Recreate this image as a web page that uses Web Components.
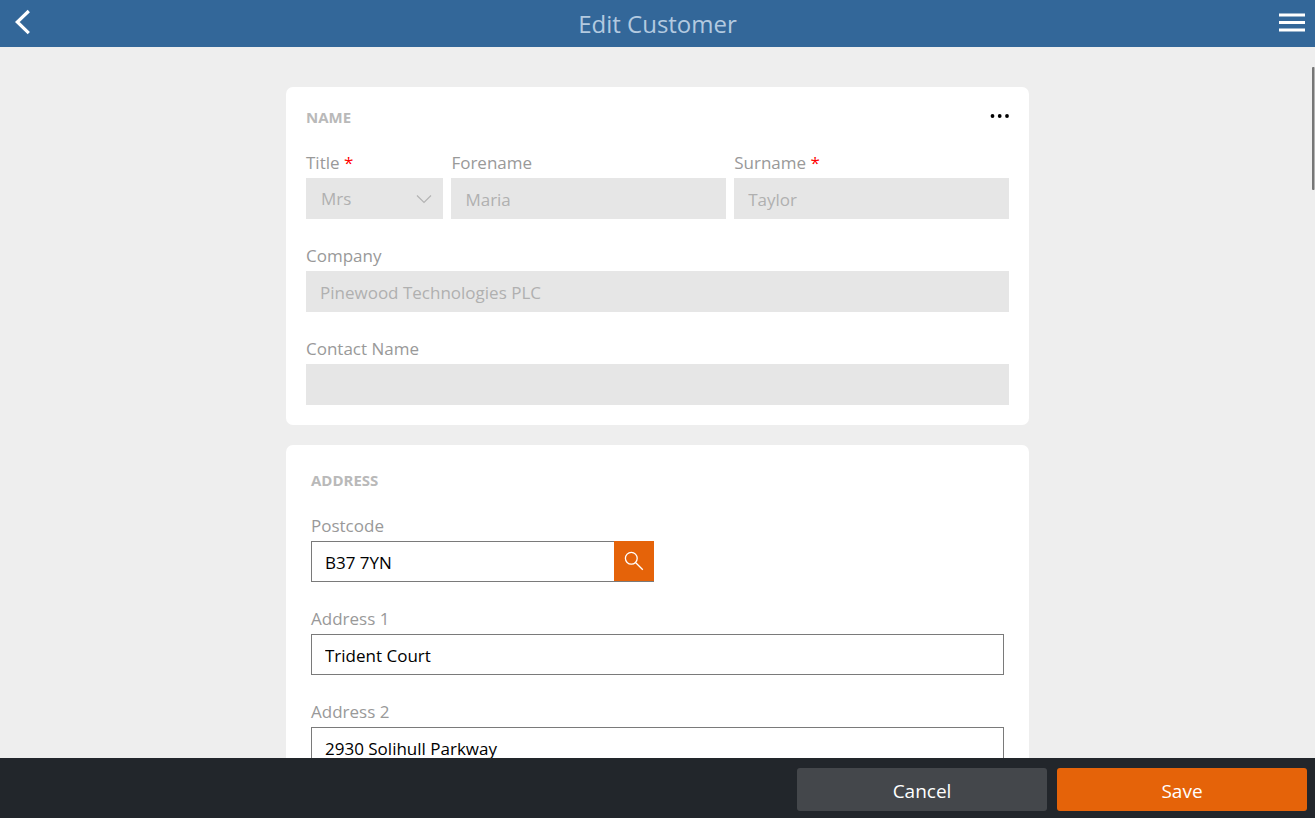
<!DOCTYPE html>
<html lang="en">
<head>
<meta charset="utf-8">
<meta name="viewport" content="width=device-width, initial-scale=1">
<title>Edit Customer</title>
<style>
    html, body {
        height: 100%;
        margin: 0;
    }

    body {
        font-family: 'Open Sans', 'Noto Sans', sans-serif;
        font-size: 17px;
        color: #000;
        --brand: #336799;
        --accent: #e56309;
    }
</style>
</head>
<body>
<customer-page></customer-page>

<script>
class AppHeader extends HTMLElement {
    constructor() {
        super();
        this.attachShadow({ mode: 'open' });
    }

    connectedCallback() {
        this.shadowRoot.innerHTML = `
            <style>
                :host {
                    display: grid;
                    grid-template-columns: 48px 1fr 48px;
                    align-items: center;
                    height: 47px;
                    background: var(--brand);
                }

                h1 {
                    margin: 0;
                    font-size: 24px;
                    font-weight: 400;
                    line-height: 47px;
                    text-align: center;
                    color: #b3cae0;
                }

                button {
                    display: flex;
                    align-items: center;
                    height: 44px;
                    padding: 0 10px;
                    border: 0;
                    background: none;
                    align-self: start;
                }

                .menu {
                    justify-content: flex-end;
                }

                svg {
                    display: block;
                    fill: none;
                    stroke: #fff;
                }
            </style>
            <button type="button" aria-label="Back">
                <svg width="24" height="26" viewBox="0 0 24 26" stroke-width="3.2"><path d="M18.8 2 7.3 13 18.8 24.2"/></svg>
            </button>
            <h1><slot></slot></h1>
            <button type="button" class="menu" aria-label="Menu">
                <svg width="26" height="20" viewBox="0 0 26 20" stroke-width="2.8"><path d="M0 3h26M0 10.5h26M0 18h26"/></svg>
            </button>
        `;
    }
}

class FormCard extends HTMLElement {
    constructor() {
        super();
        this.attachShadow({ mode: 'open' });
    }

    connectedCallback() {
        this.shadowRoot.innerHTML = `
            <style>
                :host {
                    display: block;
                    padding: 20px;
                    border-radius: 7px;
                    background: #fff;
                }

                :host([inset]) {
                    padding: 25px;
                }

                header {
                    display: flex;
                    justify-content: space-between;
                    align-items: center;
                    height: 20px;
                    margin-bottom: 23px;
                }

                h2 {
                    margin: 0;
                    font-size: 15px;
                    font-weight: 700;
                    line-height: 20px;
                    text-transform: uppercase;
                    color: #b9b9b9;
                }

                .fields {
                    display: grid;
                    gap: 24px;
                }
            </style>
            <header>
                <h2>${this.getAttribute('heading')}</h2>
                <slot name="action"></slot>
            </header>
            <div class="fields"><slot></slot></div>
        `;
    }
}

class MoreButton extends HTMLElement {
    constructor() {
        super();
        this.attachShadow({ mode: 'open' });
    }

    connectedCallback() {
        this.shadowRoot.innerHTML = `
            <style>
                :host {
                    display: block;
                }

                button {
                    display: block;
                    padding: 0;
                    border: 0;
                    background: none;
                }

                svg {
                    display: block;
                }
            </style>
            <button type="button" aria-label="More">
                <svg width="20" height="20" viewBox="0 0 20 20"><circle cx="3.5" cy="9" r="1.9"/><circle cx="10.7" cy="9" r="1.9"/><circle cx="18" cy="9" r="1.9"/></svg>
            </button>
        `;
    }
}

class FormRow extends HTMLElement {
    constructor() {
        super();
        this.attachShadow({ mode: 'open' });
    }

    connectedCallback() {
        this.shadowRoot.innerHTML = `
            <style>
                :host {
                    display: grid;
                    grid-template-columns: 1fr 2fr 2fr;
                    gap: 8px;
                }

                :host([halves]) {
                    grid-template-columns: 1fr 1fr;
                }
            </style>
            <slot></slot>
        `;
    }
}

class FormField extends HTMLElement {
    constructor() {
        super();
        this.attachShadow({ mode: 'open' });
    }

    connectedCallback() {
        const label = this.getAttribute('label');
        const value = this.getAttribute('value') || '';
        const disabled = this.hasAttribute('disabled') ? 'disabled' : '';
        const star = this.hasAttribute('required') ? ' <span class="star">*</span>' : '';

        let control = `<input id="control" type="text" value="${value}" ${disabled}>`;
        if (this.getAttribute('type') === 'select') {
            control = `
                <select id="control" ${disabled}><option>${value}</option></select>
                <svg class="chevron" width="16" height="10" viewBox="0 0 16 10"><path d="M1 1.5 8 8.500l7-7"/></svg>
            `;
        }

        this.shadowRoot.innerHTML = `
            <style>
                :host {
                    display: block;
                    min-width: 0;
                }

                label {
                    display: block;
                    padding-bottom: 2px;
                    line-height: 26px;
                    color: #999;
                }

                .star {
                    color: #f00;
                }

                .box {
                    display: flex;
                    align-items: center;
                    box-sizing: border-box;
                    height: 41px;
                    border: 1px solid #7a7a7a;
                    background: #fff;
                }

                :host([disabled]) .box {
                    border-color: #e6e6e6;
                    background: #e6e6e6;
                }

                input, select {
                    flex: 1;
                    min-width: 0;
                    height: 39px;
                    box-sizing: border-box;
                    margin: 0;
                    padding: 2px 13px 0;
                    border: 0;
                    border-radius: 0;
                    outline: 0;
                    appearance: none;
                    background: none;
                    font: inherit;
                    color: inherit;
                    opacity: 1;
                }

                select {
                    padding: 0 14px;
                }

                input:disabled, select:disabled {
                    color: #b0b0b0;
                }

                .chevron {
                    flex: none;
                    margin-right: 10px;
                    fill: none;
                    stroke: #b4b4b4;
                    stroke-width: 1.2;
                }
            </style>
            <label for="control">${label}${star}</label>
            <div class="box">${control}<slot></slot></div>
        `;
    }
}

class SearchButton extends HTMLElement {
    constructor() {
        super();
        this.attachShadow({ mode: 'open' });
    }

    connectedCallback() {
        this.shadowRoot.innerHTML = `
            <style>
                :host {
                    display: block;
                    flex: none;
                    /* sits over the border of the field */
                    margin: -1px -1px 0 0;
                }

                button {
                    display: flex;
                    justify-content: center;
                    align-items: center;
                    width: 40px;
                    height: 40px;
                    padding: 0;
                    border: 0;
                    background: var(--accent);
                }
            </style>
            <button type="button" aria-label="Find address">
                <svg width="20" height="20" viewBox="0 0 20 20" fill="none" stroke="#fff" stroke-width="1.3"><circle cx="7.300" cy="7.300" r="5.900"/><path d="m11.500 11.500 7.300 7.300"/></svg>
            </button>
        `;
    }
}

class ActionButton extends HTMLElement {
    constructor() {
        super();
        this.attachShadow({ mode: 'open' });
    }

    connectedCallback() {
        this.shadowRoot.innerHTML = `
            <style>
                :host {
                    display: block;
                    flex: 0 1 250px;
                }

                button {
                    display: block;
                    width: 100%;
                    height: 43px;
                    padding: 2px 0 0;
                    border: 0;
                    border-radius: 3px;
                    background: #44474b;
                    font: inherit;
                    font-size: 19px;
                    color: #fff;
                }

                :host([primary]) button {
                    background: var(--accent);
                }
            </style>
            <button type="button"><slot></slot></button>
        `;
    }
}

class CustomerPage extends HTMLElement {
    constructor() {
        super();
        this.attachShadow({ mode: 'open' });
    }

    connectedCallback() {
        this.shadowRoot.innerHTML = `
            <style>
                :host {
                    display: flex;
                    flex-direction: column;
                    position: relative;
                    height: 100vh;
                    background: #eee;
                }

                main {
                    flex: 1;
                    min-height: 0;
                    overflow-y: auto;
                    scrollbar-width: none;
                    padding: 40px 20px;
                }

                form {
                    display: grid;
                    gap: 20px;
                    max-width: 743px;
                    margin: 0 auto;
                }

                .thumb {
                    position: absolute;
                    top: 67px;
                    right: 0;
                    width: 3px;
                    height: 123px;
                    border-radius: 1px;
                    background: linear-gradient(to right, #767676 2px, #b4b4b4 2px);
                }

                footer {
                    display: flex;
                    justify-content: flex-end;
                    gap: 10px;
                    padding: 10px 8px 7px;
                    background: #22262b;
                }
            </style>
            <app-header>Edit Customer</app-header>
            <main>
                <form>
                    <form-card heading="Name">
                        <more-button slot="action"></more-button>
                        <form-row>
                            <form-field label="Title" type="select" value="Mrs" required disabled></form-field>
                            <form-field label="Forename" value="Maria" disabled></form-field>
                            <form-field label="Surname" value="Taylor" required disabled></form-field>
                        </form-row>
                        <form-field label="Company" value="Pinewood Technologies PLC" disabled></form-field>
                        <form-field label="Contact Name" disabled></form-field>
                    </form-card>
                    <form-card heading="Address" inset>
                        <form-row halves>
                            <form-field label="Postcode" value="B37 7YN"><search-button></search-button></form-field>
                        </form-row>
                        <form-field label="Address 1" value="Trident Court"></form-field>
                        <form-field label="Address 2" value="2930 Solihull Parkway"></form-field>
                    </form-card>
                </form>
            </main>
            <div class="thumb"></div>
            <footer>
                <action-button>Cancel</action-button>
                <action-button primary>Save</action-button>
            </footer>
        `;
    }
}

customElements.define('app-header', AppHeader);
customElements.define('form-card', FormCard);
customElements.define('more-button', MoreButton);
customElements.define('form-row', FormRow);
customElements.define('form-field', FormField);
customElements.define('search-button', SearchButton);
customElements.define('action-button', ActionButton);
customElements.define('customer-page', CustomerPage);
</script>
</body>
</html>
